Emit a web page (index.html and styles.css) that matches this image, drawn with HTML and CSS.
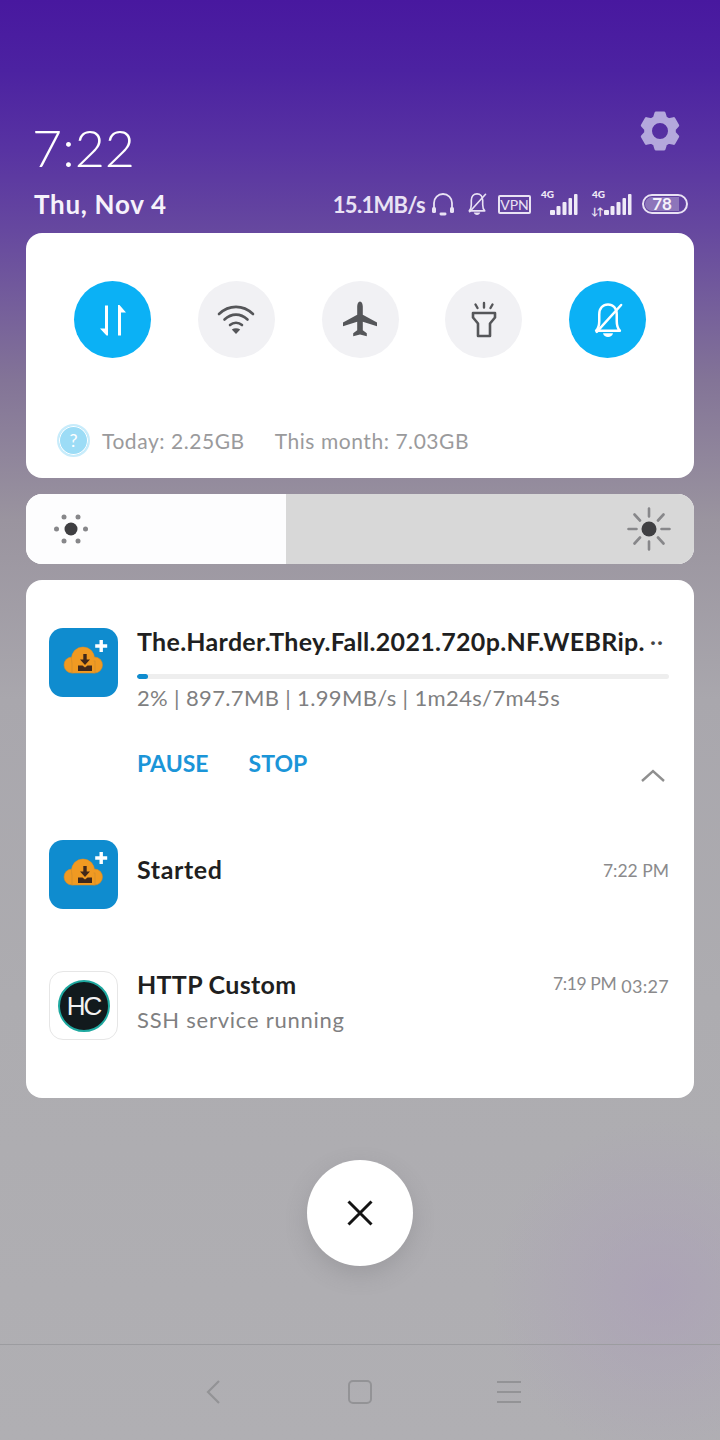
FILE: index.html
```html
<!DOCTYPE html>
<html lang="en">
<head>
<meta charset="utf-8">
<title>Notification shade</title>
<link rel="stylesheet" href="styles.css">
</head>
<body>
<svg class="defs" width="0" height="0" aria-hidden="true">
  <defs>
    <symbol id="app-dl" viewBox="0 0 69 69">
      <rect width="69" height="69" rx="14" fill="#0f8ccf"/>
      <g fill="#f09a22" stroke="#c98a30" stroke-width=".6">
        <circle cx="23" cy="37" r="8"/>
        <circle cx="34" cy="30.500" r="11.500"/>
        <circle cx="45.500" cy="37" r="8"/>
        <rect x="23" y="33" width="23" height="12"/>
      </g>
      <circle cx="34" cy="30.500" r="11" fill="#f09a22"/>
      <rect x="24" y="34" width="21" height="10.500" fill="#f09a22"/>
      <path d="M34.300 26h3.400v5.500H41L36 37l-5-5.500h3.300z" fill="#40281a"/>
      <path d="M29 37.500h4.500l2.500 2 2.500-2H43V43H29z" fill="#40281a"/>
      <path d="M50.500 12h3.400v4.300h4.300v3.400h-4.300V24h-3.400v-4.300h-4.300v-3.400h4.300z" fill="#fff"/>
    </symbol>
    <symbol id="bell-off" viewBox="0 0 32 32">
      <path d="M6.500 24.500H25.500C23.500 22.500 23 20 23 17V11.500C23 6.500 20 3.500 16 3.500S9 6.500 9 11.500V17C9 20 8.500 22.500 6.500 24.500Z" fill="none" stroke="currentColor" stroke-width="2" stroke-linejoin="round"/>
      <path d="M12 26.500h8c-.5 2-2 3-4 3s-3.500-1-4-3z" fill="currentColor"/>
      <path d="M7 25.500 26.500 4" stroke="currentColor" stroke-width="2" stroke-linecap="round"/>
    </symbol>
    <symbol id="signal" viewBox="0 0 36 24">
      <rect x="8" y="18" width="5" height="5" rx="1"/>
      <rect x="14.500" y="14" width="4" height="9" rx="1"/>
      <rect x="20.500" y="10" width="4" height="13" rx="1"/>
      <rect x="26.500" y="6" width="3.500" height="17" rx="1"/>
      <rect x="32" y="2" width="3.500" height="21" rx="1"/>
    </symbol>
  </defs>
</svg>

<div class="shade">
  <header class="header">
    <div class="clock-row">
      <div class="clock">7:22</div>
      <svg class="gear" viewBox="0 0 40 40" aria-hidden="true">
        <path fill-rule="evenodd" d="M16 2h8l1.500 4.800 3.300 1.900 4.900-1.100 4 6.900-3.400 3.700v3.600l3.400 3.700-4 6.900-4.900-1.100-3.300 1.900L24 38h-8l-1.500-4.800-3.300-1.900-4.900 1.100-4-6.900 3.400-3.700v-3.600l-3.400-3.700 4-6.900 4.900 1.100 3.300-1.900zM20 10.500a9.500 9.500 0 1 0 0 19 9.500 9.500 0 0 0 0-19z" stroke="#b4a8dc" stroke-width="3" stroke-linejoin="round"/>
      </svg>
    </div>
    <div class="status-row">
      <div class="date">Thu, Nov 4</div>
      <div class="status">
        <span class="speed">15.1MB/s</span>
        <svg class="st-head" viewBox="0 0 24 24" aria-hidden="true">
          <path d="M3 18v-7a9 9 0 0 1 18 0v7" fill="none" stroke="currentColor" stroke-width="1.800"/>
          <rect x="1" y="15" width="4" height="6" rx="1.500" fill="currentColor"/>
          <rect x="19" y="15" width="4" height="6" rx="1.500" fill="currentColor"/>
          <rect x="8.500" y="20.500" width="7" height="3" rx="1.400" fill="currentColor"/>
        </svg>
        <svg class="st-bell"><use href="#bell-off"/></svg>
        <span class="vpn">VPN</span>
        <span class="net"><span class="net-label">4G</span><svg class="st-signal"><use href="#signal"/></svg></span>
        <span class="net net-second"><span class="net-label">4G</span><span class="arrows">↓↑</span><svg class="st-signal"><use href="#signal"/></svg></span>
        <span class="battery"><span class="battery-level">78</span></span>
      </div>
    </div>
  </header>

  <section class="card toggles">
    <div class="toggle-row">
      <div class="toggle on">
        <svg viewBox="0 0 40 40" aria-hidden="true">
          <path d="M12 5.500h3v30h-1.500L7 28.500h5zM25 35.500h3v-23h5L26.500 5H25z" fill="#fff"/>
        </svg>
      </div>
      <div class="toggle">
        <svg viewBox="0 0 40 40" aria-hidden="true">
          <path d="M3 14c10-9.500 24-9.500 34 0M8.500 19.500c7-6.500 16-6.500 23 0M14 25c3.500-3 8.500-3 12 0" fill="none" stroke="#555659" stroke-width="2.600" stroke-linecap="round"/>
          <path d="M20 34l-4.200-4.500c2.500-1.700 5.900-1.700 8.400 0z" fill="#555659"/>
        </svg>
      </div>
      <div class="toggle">
        <svg viewBox="0 0 40 40" aria-hidden="true">
          <path d="M20 1.500c1.700 0 2.800 2.500 2.800 5v8.200L37 22.500v3.700l-14.200-4.500v8.600l4 3v3l-6.800-1.700-6.800 1.700v-3l4-3v-8.600L3 26.200v-3.700l14.200-7.800V6.500c0-2.500 1.100-5 2.800-5z" fill="#555659"/>
        </svg>
      </div>
      <div class="toggle">
        <svg viewBox="0 0 40 40" aria-hidden="true">
          <path d="M9 13h22v4.500l-5 6V36H14V23.500l-5-6z" fill="none" stroke="#555659" stroke-width="2.600" stroke-linejoin="round"/>
          <path d="M20 3v4.500M11.500 4.500l2 3.500M28.500 4.500l-2 3.500" stroke="#555659" stroke-width="2.400" stroke-linecap="round"/>
        </svg>
      </div>
      <div class="toggle on">
        <svg class="toggle-bell" aria-hidden="true"><use href="#bell-off"/></svg>
      </div>
    </div>
    <div class="usage">
      <span class="help">?</span>
      <span class="usage-today">Today: 2.25GB</span>
      <span>This month: 7.03GB</span>
    </div>
  </section>

  <section class="card slider">
    <div class="slider-fill">
      <svg class="sun" viewBox="0 0 36 36" aria-hidden="true">
        <circle cx="18" cy="18" r="6.500" fill="#3f3f42"/>
        <g fill="#87878a">
          <circle cx="3.500" cy="18" r="2.500"/><circle cx="32.500" cy="18" r="2.500"/>
          <circle cx="11" cy="6" r="2.500"/><circle cx="25" cy="6" r="2.500"/>
          <circle cx="11" cy="30" r="2.500"/><circle cx="25" cy="30" r="2.500"/>
        </g>
      </svg>
    </div>
    <div class="slider-rest">
      <svg class="sun sun-big" viewBox="0 0 44 44" aria-hidden="true">
        <circle cx="22" cy="22" r="7.500" fill="#3f3f42"/>
        <path d="M22 1.500v8M22 34.500v8M1.500 22h8M34.500 22h8M7.500 7.500l5.500 6M36.500 7.500l-5.500 6M7.500 36.500l5.500-6M36.500 36.500l-5.500-6" stroke="#87878a" stroke-width="2.600" stroke-linecap="round"/>
      </svg>
    </div>
  </section>

  <section class="card notes">
    <article class="note note-download">
      <svg class="app-icon"><use href="#app-dl"/></svg>
      <div class="note-body">
        <div class="note-title title-long">The.Harder.They.Fall.2021.720p.NF.WEBRip.<span class="more">··</span></div>
        <div class="progress"><div class="progress-bar" style="width:2%"></div></div>
        <div class="note-text">2% | 897.7MB | 1.99MB/s | 1m24s/7m45s</div>
        <div class="actions">
          <span class="action">PAUSE</span>
          <span class="action">STOP</span>
          <svg class="chevron" viewBox="0 0 26 14" aria-hidden="true"><path d="M2 13 13 3l11 10" fill="none" stroke="#8f8f8f" stroke-width="2.400"/></svg>
        </div>
      </div>
    </article>

    <article class="note note-started">
      <svg class="app-icon"><use href="#app-dl"/></svg>
      <div class="note-title">Started</div>
      <div class="note-time">7:22 PM</div>
    </article>

    <article class="note note-http">
      <div class="hc-icon"><span class="hc-disc">HC</span></div>
      <div class="note-body">
        <div class="note-head">
          <div class="note-title">HTTP Custom</div>
          <div class="note-times"><span class="note-time time-tight">7:19 PM</span><span class="note-time timer">03:27</span></div>
        </div>
        <div class="note-text">SSH service running</div>
      </div>
    </article>
  </section>

  <div class="close-wrap">
    <div class="close">
      <svg viewBox="0 0 26 26" aria-hidden="true"><path d="M1.500 1.500l23 23M24.500 1.500l-23 23" stroke="#141414" stroke-width="3"/></svg>
    </div>
  </div>

  <nav class="navbar">
    <svg class="nav-back" viewBox="0 0 16 26" aria-hidden="true"><path d="M14 2 3 13l11 11" fill="none" stroke="#939396" stroke-width="2.200"/></svg>
    <span class="nav-home"></span>
    <span class="nav-menu"><i></i><i></i><i></i></span>
  </nav>
</div>
</body>
</html>
```

FILE: styles.css
```css
* { box-sizing: border-box; }
html, body { margin: 0; padding: 0; }
body {
  width: 720px;
  height: 1440px;
  overflow: hidden;
  font-family: "Lato", "Liberation Sans", sans-serif;
}
.defs { position: absolute; }

.shade {
  width: 720px;
  height: 1440px;
  display: flex;
  flex-direction: column;
  background:
    radial-gradient(circle at 660px 1290px, rgba(170,155,185,.55) 0, rgba(170,155,185,0) 170px),
    linear-gradient(180deg, #48189f 0, #4c22a1 70px, #5833a2 150px, #66489f 230px, #837497 380px, #9a949f 520px, #a9a7ad 700px, #adacb0 1000px, #b0afb3 1440px);
}

.header { height: 233px; padding: 112px 34px 0; color: #fff; flex: none; }
.clock-row { display: flex; justify-content: space-between; height: 70px; }
.clock { font-size: 52px; font-weight: 300; line-height: 70px; margin-left: -2px; }
.gear { width: 40px; height: 40px; margin: -1px 6px 0 0; fill: #b4a8dc; }

.status-row { display: flex; justify-content: space-between; align-items: center; margin-top: 6px; height: 32px; }
.date { font-size: 26px; font-weight: 700; letter-spacing: .7px; color: #f6f2fb; }
.status { display: flex; align-items: center; color: #e9e2f4; margin-right: -2px; }
.speed { font-size: 22px; font-weight: 700; letter-spacing: -.7px; margin-right: 6px; }
.st-head { width: 24px; height: 24px; margin-right: 9px; }
.st-bell { width: 26px; height: 26px; margin-right: 8px; }
.vpn { border: 2px solid currentColor; border-radius: 2px; font-size: 14px; font-weight: 400; line-height: 15px; padding: 0; width: 33px; height: 19px; text-align: center; margin-right: 10px; }
.net { position: relative; display: block; width: 37px; height: 24px; margin-right: 14px; color: #efeaf7; }
.net-second { width: 40px; margin-right: 10px; }
.net-label { position: absolute; left: 0; top: -4px; font-size: 10px; font-weight: 900; }
.arrows { position: absolute; left: -1px; bottom: -1px; font-size: 10px; font-weight: 700; letter-spacing: -2px; }
.st-signal { display: block; width: 36px; height: 24px; margin-left: auto; fill: currentColor; }
.battery { display: flex; width: 46px; height: 20px; border: 2px solid #e9e2f4; border-radius: 10px; padding: 1px; }
.battery-level { flex: none; width: 34px; border-radius: 8px 0 0 8px; background: rgba(255,255,255,.28); color: #f6f2fb; font-size: 17px; font-weight: 700; line-height: 14px; text-align: center; }

.card { margin: 0 26px; background: #fff; border-radius: 16px; flex: none; }

.toggles { height: 245px; padding: 48px 48px 0 48px; }
.toggle-row { display: flex; justify-content: space-between; }
.toggle { width: 77px; height: 77px; border-radius: 50%; background: #f1f1f4; display: flex; align-items: center; justify-content: center; color: #fff; }
.toggle.on { background: #0bb1f5; }
.toggle svg { width: 40px; height: 40px; }
.usage { display: flex; align-items: center; margin: 65px 0 0 -17px; height: 34px; font-size: 21px; color: #9a9a9c; letter-spacing: .55px; }
.help { width: 33px; height: 33px; border-radius: 50%; background: #9cdcf6; border: 2px solid #c8ecfb; box-shadow: inset 0 0 0 1px #fff; color: #fff; font-size: 18px; line-height: 29px; text-align: center; margin-right: 12px; letter-spacing: 0; }
.usage-today { margin-right: 30px; }

.slider { height: 70px; margin-top: 16px; display: flex; overflow: hidden; }
.slider-fill { width: 260px; background: #fdfdfe; display: flex; align-items: center; padding-left: 27px; }
.slider-rest { flex: 1; background: #d8d8d8; display: flex; align-items: center; justify-content: flex-end; padding-right: 23px; }
.sun { width: 36px; height: 36px; }
.sun-big { width: 44px; height: 44px; }

.notes { height: 518px; margin-top: 16px; padding: 48px 25px 0 23px; }
.note { display: flex; }
.app-icon { width: 69px; height: 69px; flex: none; }
.note-body { flex: 1; margin-left: 19px; min-width: 0; }
.note-title { font-size: 25px; font-weight: 700; color: #1f1f21; line-height: 28px; letter-spacing: .3px; white-space: nowrap; }
.title-long { margin-top: -1px; }
.more { margin-left: 5px; font-weight: 400; color: #444; }
.note-text { font-size: 22px; color: #7f7f81; line-height: 28px; letter-spacing: .35px; white-space: nowrap; }
.progress { height: 5px; margin-top: 19px; background: #eeeeee; border-radius: 3px; overflow: hidden; }
.progress-bar { height: 100%; background: #0f8ccf; border-radius: 3px; }
.note-download .note-text { margin-top: 5px; }
.actions { display: flex; align-items: center; margin-top: 37px; height: 28px; }
.action { font-size: 23px; font-weight: 700; color: #1b95d8; margin-right: 40px; }
.chevron { width: 26px; height: 14px; margin: 24px 3px 0 auto; }

.note-started { margin-top: 63px; align-items: center; }
.note-started .note-title { margin-left: 19px; margin-bottom: 12px; flex: 1; letter-spacing: .6px; }
.note-time { font-size: 17.5px; color: #8a8a8c; }
.time-tight { letter-spacing: -.4px; }
.note-started .note-time { margin-bottom: 8px; }

.note-http { margin-top: 62px; }
.note-http .note-title { margin-top: -1px; }
.hc-icon { width: 69px; height: 69px; flex: none; border: 1px solid #e6e6e6; border-radius: 14px; display: flex; align-items: center; justify-content: center; }
.hc-disc { width: 52px; height: 52px; border-radius: 50%; background: #121a1d; border: 2px solid #1fa9a0; color: #f2f2f2; font-family: "Liberation Sans", sans-serif; font-size: 26px; line-height: 48px; text-align: center; letter-spacing: -2px; }
.note-head { display: flex; justify-content: space-between; align-items: flex-start; height: 28px; }
.note-times { display: flex; gap: 5px; align-items: flex-start; margin-top: 2px; }
.timer { margin-top: 2px; font-size: 18px; letter-spacing: .3px; }
.note-http .note-text { margin-top: 7px; letter-spacing: .75px; }

.close-wrap { display: flex; justify-content: center; margin-top: 62px; flex: none; }
.close { width: 106px; height: 106px; border-radius: 50%; background: #fff; box-shadow: 0 8px 22px rgba(90,90,95,.22); display: flex; align-items: center; justify-content: center; }
.close svg { width: 26px; height: 26px; }

.navbar { margin-top: 78px; height: 96px; border-top: 1px solid #9c9ca0; display: flex; justify-content: center; align-items: center; padding: 0 0 1px 6px; }
.nav-back { width: 16px; height: 26px; margin-right: 127px; }
.nav-home { width: 24px; height: 24px; border: 2px solid #939396; border-radius: 5px; margin-right: 125px; }
.nav-menu { width: 24px; height: 24px; display: flex; flex-direction: column; justify-content: space-between; padding: 1px 0; }
.nav-menu i { display: block; height: 2px; background: #939396; }
```
